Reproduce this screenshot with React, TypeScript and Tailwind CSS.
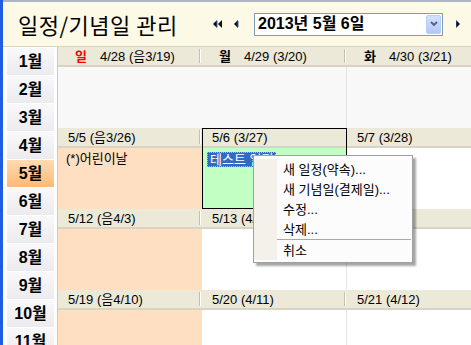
const months = ["1월", "2월", "3월", "4월", "5월", "6월", "7월", "8월", "9월", "10월", "11월", "12월"];

type Cell = {
  label: string;
  weekday?: string;
  weekdayRed?: boolean;
  bg: string;
  selected?: boolean;
  events?: { text: string; active?: boolean }[];
};

const weeks: Cell[][] = [
  [
    { label: "4/28 (음3/19)", weekday: "일", weekdayRed: true, bg: "bg-[#f8f8f8]" },
    { label: "4/29 (3/20)", weekday: "월", bg: "bg-[#f8f8f8]" },
    { label: "4/30 (3/21)", weekday: "화", bg: "bg-[#f8f8f8]" },
  ],
  [
    { label: "5/5 (음3/26)", bg: "bg-[#ffdfc1]", events: [{ text: "(*)어린이날" }] },
    { label: "5/6 (3/27)", bg: "bg-[#c2ffc2]", selected: true, events: [{ text: "테스트 일정", active: true }] },
    { label: "5/7 (3/28)", bg: "bg-white" },
  ],
  [
    { label: "5/12 (음4/3)", bg: "bg-[#ffdfc1]" },
    { label: "5/13 (4/4)", bg: "bg-white" },
    { label: "5/14 (4/5)", bg: "bg-white" },
  ],
  [
    { label: "5/19 (음4/10)", bg: "bg-[#ffdfc1]" },
    { label: "5/20 (4/11)", bg: "bg-white" },
    { label: "5/21 (4/12)", bg: "bg-white" },
  ],
];

const menuItems = ["새 일정(약속)...", "새 기념일(결제일)...", "수정...", "삭제..."];

function Arrow({ dir, double }: { dir: "left" | "right"; double?: boolean }) {
  const tri = (x: number) =>
    dir === "left" ? `M${x + 4} 0 L${x} 4 L${x + 4} 8 Z` : `M${x} 0 L${x + 4} 4 L${x} 8 Z`;
  return (
    <svg width={double ? 9 : 5} height="8" viewBox={double ? "0 0 9 8" : "0 0 5 8"}>
      <path d={tri(0)} fill="#101010" />
      {double && <path d={tri(5)} fill="#101010" />}
      <path d={dir === "left" ? "M4 1 L4 7" : "M0 1 L0 7"} stroke="#3060d0" strokeWidth="1" />
    </svg>
  );
}

export default function App() {
  return (
    <div className="relative flex h-[345px] w-[471px] overflow-hidden bg-white font-['Liberation_Sans','Noto_Sans_CJK_KR',sans-serif] text-black">
      <div className="w-[3px] shrink-0 bg-[#1f5ee0]" />
      <div className="flex min-w-0 flex-1 flex-col">
        {/* header */}
        <div className="flex h-[47px] shrink-0 items-center border-t-2 border-b border-t-[#aeb6c6] border-b-[#d8d4c0] bg-[#fcf9e7]">
          <h1 className="ml-[15px] w-[175px] shrink-0 text-[22px] leading-none font-['Noto_Sans_CJK_KR',sans-serif] tracking-[0.5px]">
            일정/기념일 관리
          </h1>
          <button className="ml-[20px] flex h-[16px] w-[12px] items-center">
            <Arrow dir="left" double />
          </button>
          <button className="ml-[9px] flex h-[16px] w-[5px] items-center justify-center">
            <Arrow dir="left" />
          </button>
          <div className="ml-[15px] flex h-[23px] w-[189px] items-center border border-[#7f9db9] bg-white pr-[1px]">
            <span className="ml-[3px] flex-1 text-[16px] leading-none font-bold">2013년 5월 6일</span>
            <span className="flex h-[19px] w-[15px] items-center justify-center rounded-[2px] border border-[#b9cdf9] bg-gradient-to-b from-[#d4e1fd] to-[#b2c8f8]">
              <svg width="8" height="6" viewBox="0 0 8 6">
                <path d="M1 1 L4 4 L7 1" stroke="#4d6185" strokeWidth="1.8" fill="none" />
              </svg>
            </span>
          </div>
          <button className="ml-[13px] flex h-[16px] w-[5px] items-center justify-center">
            <Arrow dir="right" />
          </button>
        </div>

        <div className="flex min-h-0 flex-1">
          {/* month sidebar */}
          <div className="flex w-[52px] shrink-0 flex-col gap-[1px] bg-white pt-[1px] pr-[1px] pl-[4px]">
            {months.map((m) => (
              <div
                key={m}
                className={`flex h-[27px] shrink-0 items-center justify-center text-[16px] leading-none font-bold ${
                  m === "5월"
                    ? "bg-gradient-to-b from-[#ffdcb0] to-[#fdb978]"
                    : "bg-gradient-to-b from-[#f9f9fa] to-[#ebebef]"
                }`}
              >
                {m}
              </div>
            ))}
          </div>
          <div className="w-[3px] shrink-0 border-r border-[#c8c8c8] bg-white" />

          {/* calendar */}
          <div className="flex min-w-0 flex-1 flex-col overflow-hidden text-[13px] leading-none">
            {weeks.map((week, wi) => (
              <div key={wi} className="grid shrink-0 grid-cols-[144px_145px_145px]">
                {week.map((cell, ci) => (
                  <div
                    key={ci}
                    className={`flex h-[81px] flex-col ${
                      cell.selected ? "outline outline-1 -outline-offset-1 outline-black" : ""
                    }`}
                  >
                    <div className="flex h-[20px] shrink-0 items-center justify-between border-b-2 border-[#d8d4c4] bg-[#ece9d8]">
                      {cell.weekday ? (
                        <div className="flex items-center">
                          <span
                            className={`ml-[17px] w-[25px] font-bold ${cell.weekdayRed ? "text-[#ff0000]" : ""}`}
                          >
                            {cell.weekday}
                          </span>
                          <span>{cell.label}</span>
                        </div>
                      ) : (
                        <span className="ml-[10px]">{cell.label}</span>
                      )}
                      {ci < 2 && !cell.selected && (
                        <span className="mr-[1px] h-[14px] w-[2px] border-l border-r border-l-[#c4c0b0] border-r-white" />
                      )}
                    </div>
                    <div className={`flex-1 ${cell.bg} ${ci === 1 && !cell.selected ? "border-r border-[#e4e4e4]" : ""} pt-[4px] pl-[5px]`}>
                      {cell.events?.map((ev) =>
                        ev.active ? (
                          <span
                            key={ev.text}
                            className="inline-block border border-dotted border-[#e8c060] bg-[#316ac5] px-[2px] text-white"
                          >
                            {ev.text}
                          </span>
                        ) : (
                          <span key={ev.text} className="ml-[3px] inline-block">
                            {ev.text}
                          </span>
                        )
                      )}
                    </div>
                  </div>
                ))}
              </div>
            ))}
          </div>
        </div>
      </div>

      {/* context menu */}
      <div className="absolute top-[155px] left-[253px] flex w-[160px] border border-[#a0a0a0] bg-[#fcfcfc] pt-[3px] pb-[2px] text-[13px] leading-none shadow-[3px_3px_2px_rgba(0,0,0,0.35)]">
        <div className="w-[23px] shrink-0 bg-[#f3f1e9]" />
        <div className="flex flex-1 flex-col">
          {menuItems.map((t) => (
            <div key={t} className="flex h-[20px] items-center pl-[6px]">
              {t}
            </div>
          ))}
          <div className="mr-[1px] h-[1px] bg-[#a8a8a8]" />
          <div className="flex h-[20px] items-center pl-[6px]">취소</div>
        </div>
      </div>
    </div>
  );
}
